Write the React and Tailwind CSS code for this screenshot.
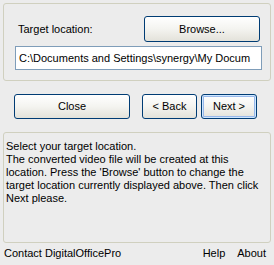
import React from "react";

const btn =
  "flex items-center justify-center rounded-[3px] border border-[#003c74] bg-gradient-to-b from-[#ffffff] via-[#f4f4f0] to-[#e3e2da] text-[11px] text-black leading-[13px]";

export default function App() {
  return (
    <div className="w-[274px] h-[265px] bg-[#ececec] overflow-hidden font-['Liberation_Sans',Arial,sans-serif] text-[11px] leading-[13px] text-black">
      <div className="pt-[3px] px-[3px]">
        {/* target location group */}
        <div className="h-[78px] w-[268px] border border-[#d0d0bf] rounded-[3px]">
          <div className="flex items-center justify-between pl-[14px] pr-[10px] mt-[12px]">
            <span className="mt-[1px]">Target location:</span>
            <button className={`${btn} w-[116px] h-[26px]`}>Browse...</button>
          </div>
          <div className="ml-[11px] mr-[8px] mt-[4px] h-[24px] border border-[#7f9db9] bg-white flex items-center pl-[3px] whitespace-nowrap">
            C:\Documents and Settings\synergy\My Docum
          </div>
        </div>

        {/* navigation buttons */}
        <div className="flex mt-[13px] h-[25px]">
          <button className={`${btn} ml-[11px] w-[116px] h-[25px]`}>Close</button>
          <button className={`${btn} ml-[12px] w-[55px] h-[25px]`}>&lt; Back</button>
          <button
            className={`${btn} ml-[4px] w-[56px] h-[25px] shadow-[inset_0_0_0_1px_#cee7ff,inset_0_0_0_2px_#98b8ea]`}
          >
            Next &gt;
          </button>
        </div>

        {/* info text */}
        <div className="mt-[13px] h-[111px] w-[268px] border border-[#d0d0bf] rounded-[3px] pt-[7px] pl-[2px] pr-[2px]">
          <p>Select your target location.</p>
          <p>
            The converted video file will be created at this location. Press the 'Browse' button to change the target
            location currently displayed above. Then click Next please.
          </p>
        </div>
      </div>

      {/* footer */}
      <div className="flex items-center mt-[4px] pl-[4px] pr-[8px]">
        <span>Contact DigitalOfficePro</span>
        <span className="ml-auto">Help</span>
        <span className="ml-[12px]">About</span>
      </div>
    </div>
  );
}
